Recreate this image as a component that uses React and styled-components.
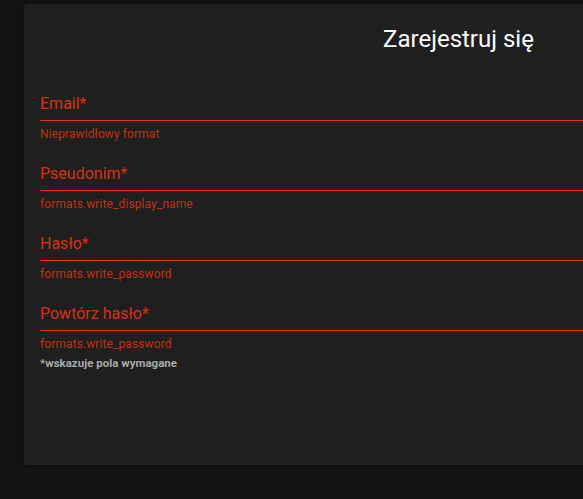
import React from "react";
import styled, { createGlobalStyle } from "styled-components";

const Global = createGlobalStyle`
  html, body {
    margin: 0;
    padding: 0;
    background: #121212;
    overflow: hidden;
    font-family: Roboto, "Liberation Sans", Arial, sans-serif;
  }
`;

const Page = styled.div`
  padding: 4px 0 0 24px;
  width: 1000px;
  height: 499px;
  box-sizing: border-box;
`;

const Card = styled.form`
  width: 869px;
  height: 461px;
  box-sizing: border-box;
  background: #1f1f1f;
  border-radius: 4px;
  box-shadow: 0 2px 1px -1px rgba(0,0,0,0.2), 0 1px 1px 0 rgba(0,0,0,0.14), 0 1px 3px 0 rgba(0,0,0,0.12);
  padding: 19px 16px 0;
  display: flex;
  flex-direction: column;
`;

const Title = styled.h2`
  margin: 0 0 33px;
  font-size: 24px;
  line-height: 32px;
  font-weight: 400;
  color: #ffffff;
  text-align: center;
`;

const Fields = styled.div`
  display: flex;
  flex-direction: column;
  gap: 14px;
`;

const Field = styled.div`
  display: flex;
  flex-direction: column;
`;

const InputBox = styled.label`
  display: block;
  height: 32px;
  box-sizing: border-box;
  padding: 4px 0 5px;
  line-height: 23px;
  font-size: 16px;
  color: #d8310f;
`;

const Underline = styled.div`
  height: 1px;
  background: #ea3000;
`;

const Helper = styled.p`
  margin: 3px 0 0;
  font-size: 12px;
  line-height: 20px;
  color: #bf320f;
  letter-spacing: 0.1px;
`;

const Required = styled.p`
  margin: 1px 0 0;
  font-size: 11.5px;
  line-height: 16px;
  font-weight: 700;
  color: #a9a9a9;
`;

const fields = [
  { label: "Email*", helper: "Nieprawidłowy format" },
  { label: "Pseudonim*", helper: "formats.write_display_name" },
  { label: "Hasło*", helper: "formats.write_password" },
  { label: "Powtórz hasło*", helper: "formats.write_password" },
];

export default function App() {
  return (
    <>
      <Global />
      <Page>
        <Card>
          <Title>Zarejestruj się</Title>
          <Fields>
            {fields.map((f) => (
              <Field key={f.label}>
                <InputBox>{f.label}</InputBox>
                <Underline />
                <Helper>{f.helper}</Helper>
              </Field>
            ))}
          </Fields>
          <Required>*wskazuje pola wymagane</Required>
        </Card>
      </Page>
    </>
  );
}
